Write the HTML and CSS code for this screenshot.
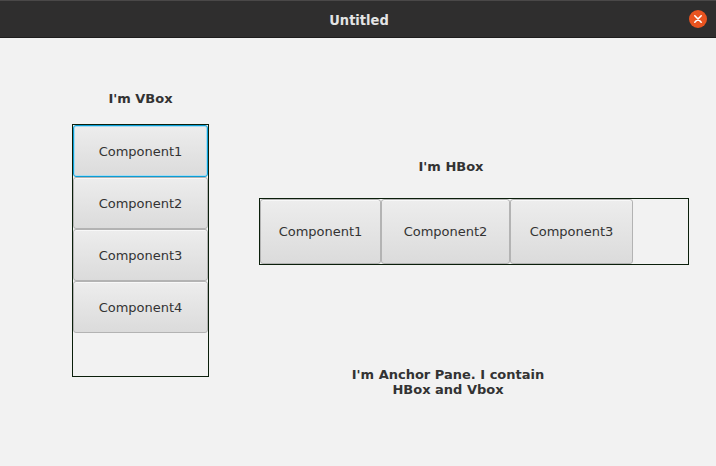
FILE: index.html
```html
<!DOCTYPE html>
<html>
<head>
<meta charset="utf-8">
<link rel="stylesheet" href="styles.css">
</head>
<body>
<div class="window">
  <header class="titlebar">
    <span class="title">Untitled</span>
    <span class="close">
      <svg width="18" height="18" viewBox="0 0 18 18"><circle cx="9" cy="9" r="9" fill="#e95420"/><path d="M5.8 5.8 L12.2 12.2 M12.2 5.8 L5.8 12.2" stroke="#fff" stroke-width="1.6" stroke-linecap="round"/></svg>
    </span>
  </header>
  <main class="anchor">
    <section class="left">
      <div class="label vlabel">I'm VBox</div>
      <div class="vbox">
        <button class="btn vbtn focused">Component1</button>
        <button class="btn vbtn">Component2</button>
        <button class="btn vbtn">Component3</button>
        <button class="btn vbtn">Component4</button>
      </div>
    </section>
    <section class="right">
      <div class="label hlabel">I'm HBox</div>
      <div class="hbox">
        <button class="btn hbtn w1">Component1</button>
        <button class="btn hbtn w2">Component2</button>
        <button class="btn hbtn w3">Component3</button>
      </div>
      <div class="label alabel">I'm Anchor Pane. I contain<br>HBox and Vbox</div>
    </section>
  </main>
</div>
</body>
</html>
```

FILE: styles.css
```css
* { box-sizing: border-box; }
html, body { margin: 0; padding: 0; }
body {
  width: 716px;
  height: 466px;
  overflow: hidden;
  background: #f2f2f2;
  font-family: "DejaVu Sans", sans-serif;
}
.window { width: 716px; height: 466px; display: flex; flex-direction: column; }
.titlebar {
  height: 38px;
  flex: none;
  background: #2f2e2e;
  border-top: 1px solid #4a4848;
  border-bottom: 1px solid #1e1d1d;
  position: relative;
  display: flex;
  align-items: center;
  justify-content: center;
}
.title {
  color: #e4e4e4;
  font-family: "DejaVu Sans Condensed", "DejaVu Sans", sans-serif;
  font-weight: bold;
  font-size: 14.5px;
  padding-top: 1px;
  padding-left: 2px;
}
.close {
  position: absolute;
  right: 9px;
  top: 9px;
  width: 18px;
  height: 18px;
  display: block;
}
.close svg { display: block; }
.anchor {
  flex: 1;
  display: flex;
  align-items: flex-start;
  padding-left: 72px;
}
.label {
  font-size: 13px;
  font-weight: bold;
  color: #333333;
  line-height: 15px;
  text-align: center;
}
.left { width: 137px; }
.vlabel { margin-top: 53px; }
.vbox {
  margin-top: 18px;
  width: 137px;
  height: 253px;
  border: 1px solid #0b1f0b;
  display: flex;
  flex-direction: column;
}
.btn {
  font-family: "DejaVu Sans", sans-serif;
  font-size: 13px;
  color: #333333;
  background: linear-gradient(#ededed, #dbdbdb);
  border: 1px solid #b3b3b3;
  border-radius: 3px;
  box-shadow: inset 0 1px 0 #f8f8f8;
  margin: 0;
  padding: 0;
  flex: none;
}
.vbtn { width: 135px; height: 52px; }
.focused {
  border-color: #0a9ed6;
  box-shadow: inset 0 0 0 1px #a8dcf2;
}
.right { margin-left: 50px; width: 430px; }
.hlabel { margin-top: 121px; width: 384px; }
.hbox {
  margin-top: 24px;
  width: 430px;
  height: 67px;
  border: 1px solid #0b1f0b;
  display: flex;
}
.hbtn { height: 65px; }
.w1 { width: 121px; }
.w2 { width: 129px; }
.w3 { width: 123px; }
.alabel { margin-top: 102px; width: 378px; }
```
